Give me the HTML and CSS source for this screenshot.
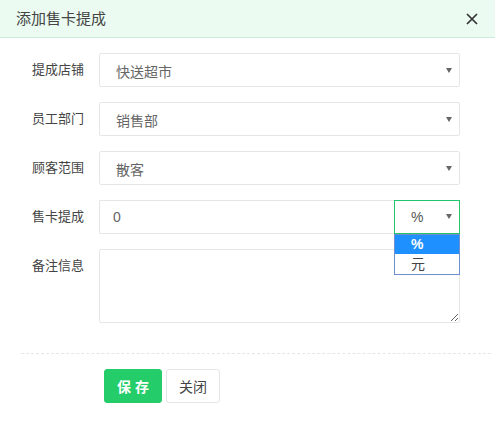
FILE: index.html
```html
<!DOCTYPE html>
<html lang="zh">
<head>
<meta charset="utf-8">
<title>添加售卡提成</title>
<link rel="stylesheet" href="styles.css">
</head>
<body>
<div class="dialog">
  <header class="dlg-head">
    <span class="title">添加售卡提成</span>
    <svg class="close" width="12" height="12" viewBox="0 0 12 12" aria-label="关闭">
      <path d="M1 1 L11 11 M11 1 L1 11" stroke="#333" stroke-width="1.7" fill="none"/>
    </svg>
  </header>
  <div class="form">
    <div class="row">
      <span class="label">提成店铺</span>
      <div class="ctrl select">快送超市<i class="caret"></i></div>
    </div>
    <div class="row">
      <span class="label">员工部门</span>
      <div class="ctrl select">销售部<i class="caret"></i></div>
    </div>
    <div class="row">
      <span class="label">顾客范围</span>
      <div class="ctrl select">散客<i class="caret"></i></div>
    </div>
    <div class="row">
      <span class="label">售卡提成</span>
      <div class="group">
        <div class="grp-input">0</div>
        <div class="unit">%<i class="caret"></i>
          <ul class="menu">
            <li class="opt active">%</li>
            <li class="opt">元</li>
          </ul>
        </div>
      </div>
    </div>
    <div class="row">
      <span class="label">备注信息</span>
      <textarea class="ctrl area"></textarea>
    </div>
  </div>
  <div class="divider"></div>
  <div class="actions">
    <button class="btn primary">保 存</button>
    <button class="btn">关闭</button>
  </div>
</div>
</body>
</html>
```
FILE: styles.css
```css
* { box-sizing: border-box; }
html, body { margin: 0; padding: 0; background: #fff; }
body {
  font-family: "Liberation Sans", "Noto Sans CJK SC", sans-serif;
  color: #333;
  width: 495px;
  height: 429px;
  overflow: hidden;
}
.dlg-head {
  height: 38px;
  background: #ebfbf1;
  border-bottom: 1px solid #cdebd9;
  display: flex;
  align-items: center;
  justify-content: space-between;
  padding: 0 17px 0 16px;
}
.title { font-size: 15px; color: #444; line-height: 36px; }
.close { display: block; }

.form {
  padding: 15px 35px 0 32px;
  display: flex;
  flex-direction: column;
  gap: 15px;
}
.row { display: flex; align-items: flex-start; }
.label {
  width: 52px;
  margin-right: 15px;
  font-size: 13px;
  line-height: 34px;
  color: #444;
  white-space: nowrap;
}
.ctrl {
  flex: 1;
  height: 34px;
  border: 1px solid #e6e6e6;
  border-radius: 2px;
  background: #fff;
}
.select {
  position: relative;
  display: flex;
  align-items: center;
  padding-left: 16px;
  padding-top: 2px;
  font-size: 14px;
  color: #666;
}
.caret {
  position: absolute;
  right: 7px;
  top: 14px;
  width: 0;
  height: 0;
  border-left: 3px solid transparent;
  border-right: 3px solid transparent;
  border-top: 5px solid #666;
}
.group { flex: 1; display: flex; height: 34px; }
.grp-input {
  flex: 1;
  border: 1px solid #e6e6e6;
  border-right: none;
  border-radius: 2px 0 0 2px;
  padding-left: 13px;
  font-size: 14px;
  color: #666;
  line-height: 32px;
}
.unit {
  position: relative;
  width: 66px;
  border: 1px solid #22c46c;
  padding-left: 16px;
  font-size: 14px;
  color: #555;
  line-height: 32px;
}
.unit .caret { top: 13px; right: 7px; }
.menu {
  position: absolute;
  top: 33px;
  left: -1px;
  width: 66px;
  margin: 0;
  padding: 0;
  list-style: none;
  border: 1px solid #6f8fd0;
  background: #fff;
  z-index: 2;
}
.opt {
  height: 20px;
  line-height: 20px;
  padding-left: 16px;
  font-size: 14px;
  color: #444;
}
.opt.active { background: #1e90ff; color: #fff; font-weight: bold; height: 19px; line-height: 19px; }
.area {
  height: 74px;
  resize: both;
  display: block;
  font: inherit;
  outline: none;
}
.divider {
  margin: 30px 4px 0 21px;
  border-top: 1px dashed #e6e6e6;
}
.actions {
  display: flex;
  gap: 4px;
  padding: 15px 0 0 104px;
}
.btn {
  height: 34px;
  padding: 0;
  width: 54px;
  border: 1px solid #e6e6e6;
  border-radius: 3px;
  background: #fff;
  font-family: inherit;
  font-size: 14px;
  color: #444;
}
.btn.primary {
  width: 58px;
  background: #24cc6a;
  border-color: #24cc6a;
  color: #fff;
  font-weight: bold;
}
```
